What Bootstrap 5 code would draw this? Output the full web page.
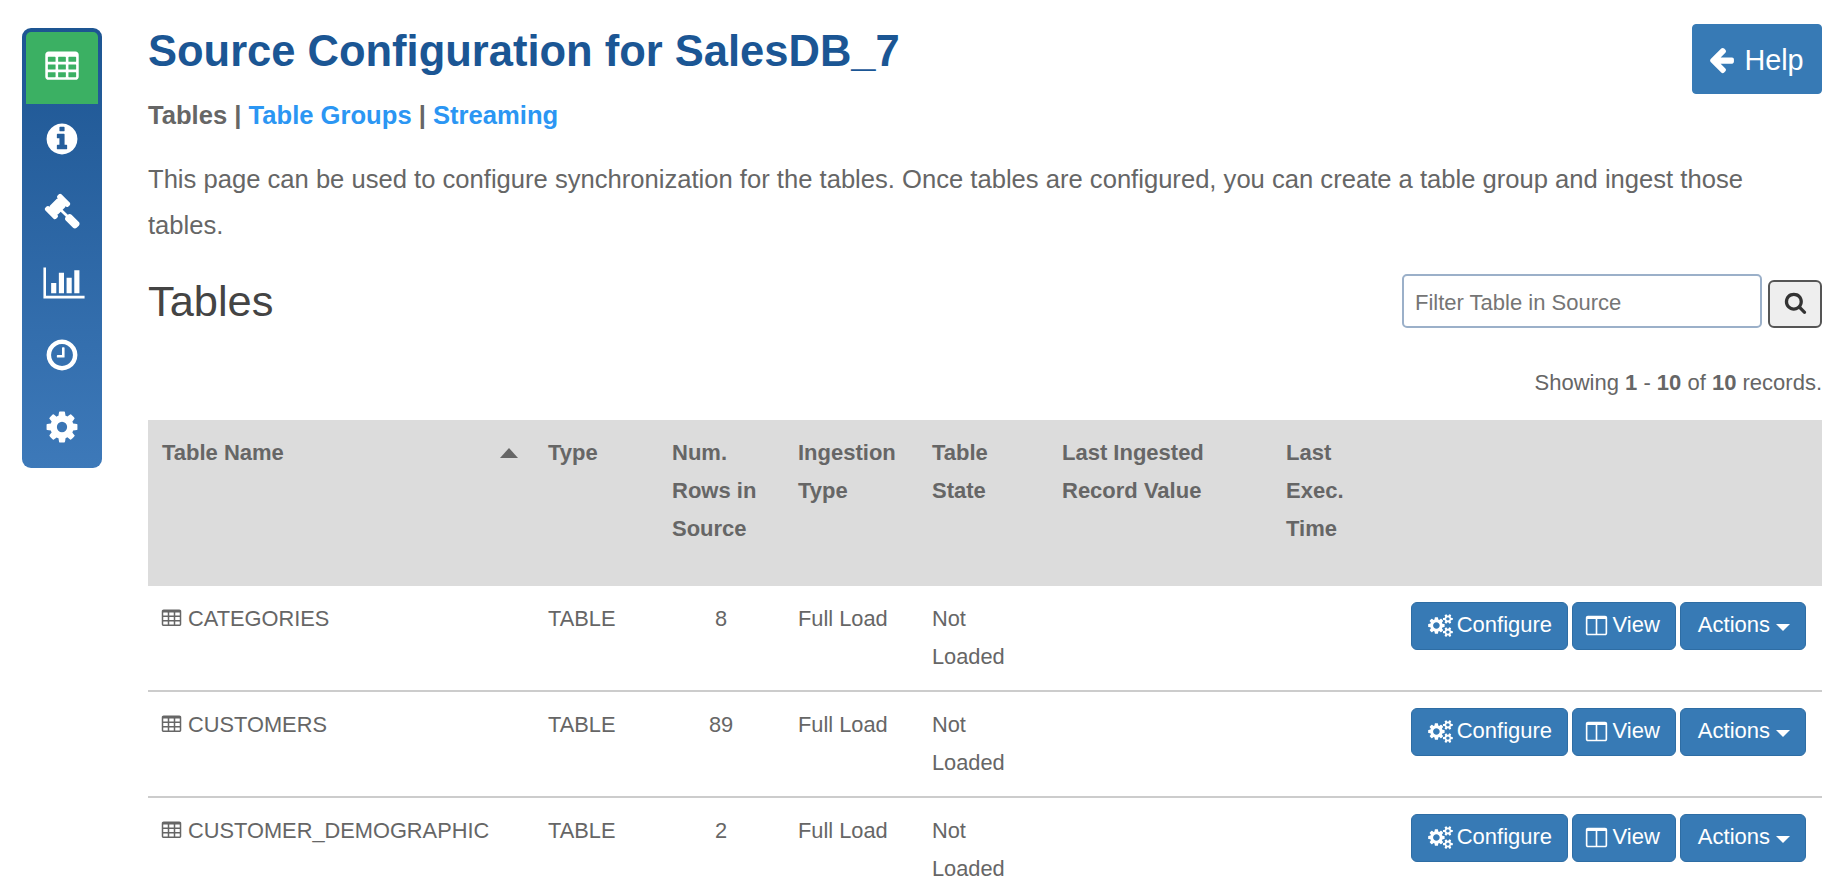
<!DOCTYPE html>
<html>

<head>
  <meta charset="utf-8">
  <meta name="viewport" content="width=device-width">
  <title>Source Configuration</title>
  <link href="https://cdn.jsdelivr.net/npm/bootstrap@5.3.2/dist/css/bootstrap.min.css" rel="stylesheet" type="text/css" />
  <script src="https://cdn.jsdelivr.net/npm/bootstrap@5.3.2/dist/js/bootstrap.bundle.min.js"></script>
  <style>
    html, body { height: 888px; overflow: hidden; }
    body { font-family: "Liberation Sans", Arial, sans-serif; font-size: 22px; line-height: 38px; color: #666; background: #fff; }
    .ico { fill: currentColor; flex: none; }

    .side-rail { width: 80px; height: 440px; margin: 28px 0 0 22px; padding: 4px; border-radius: 9px; background: linear-gradient(#1d5592, #3d79b9); flex: none; }
    .rail-item { height: 72px; color: #fff; padding-bottom: 2px; }
    .rail-item.active-item { background: #3bb063; border-radius: 5px 5px 0 0; }
    .rail-ico { width: 36px; height: 36px; }
    .rail-ico-wide { width: 42px; height: 36px; margin-left: 4px; }

    .main-area { margin-left: 46px; padding: 24px 22px 0 0; flex: 1; min-width: 0; }
    .page-title { font-size: 43.5px; font-weight: 700; line-height: 54px; color: #1b5694; margin: 0; }
    .help-btn { --bs-btn-bg: #377ab5; --bs-btn-border-color: #377ab5; --bs-btn-hover-bg: #377ab5; --bs-btn-hover-border-color: #377ab5; --bs-btn-color: #fff; --bs-btn-border-radius: 4px; width: 130px; height: 70px; font-size: 28.8px; padding: 4px 3px 0 0; }
    .help-ico { width: 29px; height: 29px; margin-top: -4px; }

    .sub-tabs { font-size: 25.6px; font-weight: 700; margin: 2px 0 22px; }
    .sub-tabs a { color: #2b96f3; text-decoration: none; }
    .intro-text { font-size: 25.6px; line-height: 46px; margin: 0 0 26px; }

    .tables-title { font-size: 43.4px; line-height: 54px; font-weight: 400; color: #444; margin: 0; }
    .filter-input { width: 360px; height: 54px; font-size: 22px; color: #666; padding: 3px 11px 0; border: 2px solid #9bb0c9; border-radius: 5px; }
    .filter-input::placeholder { color: #757575; }
    .search-btn { width: 54px; height: 48px; padding: 0 0 4px; margin-left: 6px; background: #eee; border: 2px solid #555; border-radius: 6px; color: #333; }
    .search-ico { width: 23px; height: 23px; }
    .record-count { font-size: 22px; line-height: 38px; margin: 36px 0 18px; }

    .src-tbl { width: 1674px; table-layout: fixed; margin: 0; --bs-table-color: #666; --bs-table-bg: transparent; }
    .src-tbl > thead > tr > th { background: #dcdcdc; color: #666; padding: 14px 14px 38px; border: 0; font-weight: 700; vertical-align: top; line-height: 38px; }
    .src-tbl > tbody > tr > td { padding: 14px; border-bottom: 2px solid #ccc; vertical-align: top; line-height: 38px; font-size: 21.8px; }
    .cw-name { width: 386px; }
    .cw-type { width: 124px; }
    .cw-rows { width: 126px; }
    .cw-ingest { width: 134px; }
    .cw-state { width: 130px; }
    .cw-last { width: 224px; }
    .cw-exec { width: 130px; }
    .sort-mark { width: 0; height: 0; border-left: 9px solid transparent; border-right: 9px solid transparent; border-bottom: 10px solid #666; margin: 14px 2px 0 0; }
    .tbl-ico { width: 21px; height: 21px; margin: 0 0 0 -1px; position: relative; top: -2px; }
    .row-acts { margin-top: 2px; margin-right: 2px; }
    .act-btn { --bs-btn-bg: #377ab5; --bs-btn-border-color: #2e6da4; --bs-btn-hover-bg: #377ab5; --bs-btn-hover-border-color: #2e6da4; --bs-btn-active-bg: #377ab5; --bs-btn-color: #fff; --bs-btn-hover-color: #fff; --bs-btn-border-radius: 6px; height: 48px; font-size: 22px; line-height: 1; padding: 0 15px 2px 16px; border-width: 1px; }
    .act-btn.view-act { padding-left: 10.5px; }
    .act-btn.menu-act { padding-left: 17px; }
    .act-ico { width: 25px; height: 23px; }
    .act-btn.dropdown-toggle::after { border-top-width: 7px; border-left-width: 7.5px; border-right-width: 7.5px; margin-left: 6px; vertical-align: 1px; }
  </style>
</head>

<body>
  <svg width="0" height="0" class="d-none">
    <symbol id="i-table" viewBox="0 0 1792 1792"><path fill-rule="evenodd" d="M576 1376v-192q0-14-9-23t-23-9h-320q-14 0-23 9t-9 23v192q0 14 9 23t23 9h320q14 0 23-9t9-23zm0-384v-192q0-14-9-23t-23-9h-320q-14 0-23 9t-9 23v192q0 14 9 23t23 9h320q14 0 23-9t9-23zm512 384v-192q0-14-9-23t-23-9h-320q-14 0-23 9t-9 23v192q0 14 9 23t23 9h320q14 0 23-9t9-23zm-512-768v-192q0-14-9-23t-23-9h-320q-14 0-23 9t-9 23v192q0 14 9 23t23 9h320q14 0 23-9t9-23zm512 384v-192q0-14-9-23t-23-9h-320q-14 0-23 9t-9 23v192q0 14 9 23t23 9h320q14 0 23-9t9-23zm512 384v-192q0-14-9-23t-23-9h-320q-14 0-23 9t-9 23v192q0 14 9 23t23 9h320q14 0 23-9t9-23zm-512-768v-192q0-14-9-23t-23-9h-320q-14 0-23 9t-9 23v192q0 14 9 23t23 9h320q14 0 23-9t9-23zm512 384v-192q0-14-9-23t-23-9h-320q-14 0-23 9t-9 23v192q0 14 9 23t23 9h320q14 0 23-9t9-23zm0-384v-192q0-14-9-23t-23-9h-320q-14 0-23 9t-9 23v192q0 14 9 23t23 9h320q14 0 23-9t9-23zm128-320v1088q0 66-47 113t-113 47h-1344q-66 0-113-47t-47-113v-1088q0-66 47-113t113-47h1344q66 0 113 47t47 113z"/></symbol>
    <symbol id="i-info" viewBox="0 0 1792 1792"><path fill-rule="evenodd" d="M1152 1376v-160q0-14-9-23t-23-9h-96v-512q0-14-9-23t-23-9h-320q-14 0-23 9t-9 23v160q0 14 9 23t23 9h96v320h-96q-14 0-23 9t-9 23v160q0 14 9 23t23 9h448q14 0 23-9t9-23zm-128-896v-160q0-14-9-23t-23-9h-192q-14 0-23 9t-9 23v160q0 14 9 23t23 9h192q14 0 23-9t9-23zm640 416q0 209-103 385.5t-279.5 279.5-385.5 103-385.5-103-279.5-279.5-103-385.5 103-385.5 279.5-279.5 385.5-103 385.5 103 279.5 279.5 103 385.5z"/></symbol>
    <symbol id="i-gavel" viewBox="0 0 1792 1792"><path d="M1771 1536q0 53-37 90l-107 108q-39 37-91 37-53 0-90-37l-363-364q-38-36-38-90 0-53 43-96l-256-256-126 126q-14 14-34 14t-34-14q2 2 12.5 12t12.5 13 10 11.5 10 13.5 6 13.5 5.5 16.5 1.5 18q0 38-28 68-3 3-16.5 18t-19 20.5-18.5 16.5-22 15.5-22 9-26 4.5q-40 0-68-28l-408-408q-28-28-28-68 0-13 4.5-26t9-22 15.5-22 16.5-18.5 20.5-19 18-16.5q30-28 68-28 10 0 18 1.5t16.5 5.5 13.5 6 13.5 10 11.5 10 13 12.5 12 12.5q-14-14-14-34t14-34l348-348q14-14 34-14t34 14q-2-2-12.5-12t-12.5-13-10-11.5-10-13.5-6-13.5-5.5-16.5-1.5-18q0-38 28-68 3-3 16.5-18t19-20.5 18.5-16.5 22-15.5 22-9 26-4.5q40 0 68 28l408 408q28 28 28 68 0 13-4.5 26t-9 22-15.5 22-16.5 18.5-20.5 19-18 16.5q-30 28-68 28-10 0-18-1.5t-16.5-5.5-13.5-6-13.5-10-11.5-10-13-12.5-12-12.5q14 14 14 34t-14 34l-126 126 256 256q43-43 96-43 52 0 91 37l363 363q37 39 37 91z"/></symbol>
    <symbol id="i-chart" viewBox="0 0 2048 1792"><path d="M640 896v512h-256v-512h256zm384-512v1024h-256v-1024h256zm1024 1152v128h-2048v-1536h128v1408h1920zm-640-896v768h-256v-768h256zm384-384v1152h-256v-1152h256z"/></symbol>
    <symbol id="i-clock" viewBox="0 0 1792 1792"><path fill-rule="evenodd" d="M1024 544v448q0 14-9 23t-23 9h-320q-14 0-23-9t-9-23v-64q0-14 9-23t23-9h224v-352q0-14 9-23t23-9h64q14 0 23 9t9 23zm416 352q0-148-73-273t-198-198-273-73-273 73-198 198-73 273 73 273 198 198 273 73 273-73 198-198 73-273zm224 0q0 209-103 385.5t-279.5 279.5-385.5 103-385.5-103-279.5-279.5-103-385.5 103-385.5 279.5-279.5 385.5-103 385.5 103 279.5 279.5 103 385.5z"/></symbol>
    <symbol id="i-cog" viewBox="0 0 1792 1792"><path fill-rule="evenodd" d="M1152 896q0-106-75-181t-181-75-181 75-75 181 75 181 181 75 181-75 75-181zm512-109v222q0 12-8 23t-20 13l-185 28q-19 54-39 91 35 50 107 138 10 12 10 25t-9 23q-27 37-99 108t-94 71q-12 0-26-9l-138-108q-44 23-91 38-16 136-29 186-7 28-36 28h-222q-14 0-24.5-8.5t-11.5-21.5l-28-184q-49-16-90-37l-141 107q-10 9-25 9-14 0-25-11-126-114-165-168-7-10-7-23 0-12 8-23 15-21 51-66.5t54-70.5q-27-50-41-99l-183-27q-13-2-21-12.5t-8-23.5v-222q0-12 8-23t19-13l186-28q14-46 39-92-40-57-107-138-10-12-10-24 0-10 9-23 26-36 98.5-107.5t94.5-71.5q13 0 26 10l138 107q44-23 91-38 16-136 29-186 7-28 36-28h222q14 0 24.5 8.5t11.5 21.5l28 184q49 16 90 37l142-107q9-9 24-9 13 0 25 10 129 119 165 170 7 8 7 22 0 12-8 23-15 21-51 66.5t-54 70.5q26 50 41 98l183 28q13 2 21 12.5t8 23.5z"/></symbol>
    <symbol id="i-left" viewBox="0 0 1792 1792"><path d="M1664 896v128q0 53-32.5 90.5t-84.5 37.5h-704l293 294q38 36 38 90t-38 90l-75 76q-37 37-90 37-52 0-91-37l-651-652q-37-37-37-90 0-52 37-91l651-650q38-38 91-38 52 0 90 38l75 74q38 38 38 91t-38 91l-293 293h704q52 0 84.5 37.5t32.5 90.5z"/></symbol>
    <symbol id="i-search" viewBox="0 0 1792 1792"><path fill-rule="evenodd" d="M1216 832q0-185-131.5-316.5t-316.5-131.5-316.5 131.5-131.5 316.5 131.5 316.5 316.5 131.5 316.5-131.5 131.5-316.5zm512 832q0 52-38 90t-90 38q-54 0-90-38l-343-342q-179 124-399 124-143 0-273.5-55.5t-225-150-150-225-55.5-273.5 55.5-273.5 150-225 225-150 273.5-55.5 273.5 55.5 225 150 150 225 55.5 273.5q0 220-124 399l343 343q37 37 37 90z"/></symbol>
    <symbol id="i-cogs" viewBox="0 0 1920 1792"><path fill-rule="evenodd" d="M896 896q0-106-75-181t-181-75-181 75-75 181 75 181 181 75 181-75 75-181zm768 512q0-52-38-90t-90-38-90 38-38 90q0 53 37.5 90.5t90.5 37.5 90.5-37.5 37.5-90.5zm0-1024q0-52-38-90t-90-38-90 38-38 90q0 53 37.5 90.5t90.5 37.5 90.5-37.5 37.5-90.5zm-384 421v185q0 10-7 19.5t-16 10.5l-155 24q-11 35-32 76 34 48 90 115 7 11 7 20 0 12-7 19-23 30-82.5 89.5t-78.5 59.5q-11 0-21-7l-115-90q-37 19-77 31-11 108-23 155-7 24-30 24h-186q-11 0-20-7.5t-10-17.5l-23-153q-34-10-75-31l-118 89q-7 7-20 7-11 0-21-8-144-133-144-160 0-9 7-19 10-14 41-53t47-61q-23-44-35-82l-152-24q-10-1-17-9.5t-7-19.5v-185q0-10 7-19.5t16-10.5l155-24q11-35 32-76-34-48-90-115-7-11-7-20 0-12 7-20 22-30 82-89t79-59q11 0 21 7l115 90q34-18 77-32 11-108 23-154 7-24 30-24h186q11 0 20 7.5t10 17.5l23 153q34 10 75 31l118-89q8-7 20-7 11 0 21 8 144 133 144 160 0 8-7 19-12 16-42 54t-45 60q23 48 34 82l152 23q10 2 17 10.5t7 19.5zm640 533v140q0 16-149 31-12 27-30 52 51 113 51 138 0 4-4 7-122 71-124 71-8 0-46-47t-52-68q-20 2-30 2t-30-2q-14 21-52 68t-46 47q-2 0-124-71-4-3-4-7 0-25 51-138-18-25-30-52-149-15-149-31v-140q0-16 149-31 13-29 30-52-51-113-51-138 0-4 4-7 4-2 35-20t59-34 30-16q8 0 46 46.5t52 67.5q20-2 30-2t30 2q51-71 92-112l6-2q4 0 124 70 4 3 4 7 0 25-51 138 17 23 30 52 149 15 149 31zm0-1024v140q0 16-149 31-12 27-30 52 51 113 51 138 0 4-4 7-122 71-124 71-8 0-46-47t-52-68q-20 2-30 2t-30-2q-14 21-52 68t-46 47q-2 0-124-71-4-3-4-7 0-25 51-138-18-25-30-52-149-15-149-31v-140q0-16 149-31 13-29 30-52-51-113-51-138 0-4 4-7 4-2 35-20t59-34 30-16q8 0 46 46.5t52 67.5q20-2 30-2t30 2q51-71 92-112l6-2q4 0 124 70 4 3 4 7 0 25-51 138 17 23 30 52 149 15 149 31z"/></symbol>
    <symbol id="i-columns" viewBox="0 0 1792 1792"><path fill-rule="evenodd" d="M224 1536h608v-1152h-640v1120q0 13 9.5 22.5t22.5 9.5zm1376-32v-1120h-640v1152h608q13 0 22.5-9.5t9.5-22.5zm128-1216v1216q0 66-47 113t-113 47h-1344q-66 0-113-47t-47-113v-1216q0-66 47-113t113-47h1344q66 0 113 47t47 113z"/></symbol>
  </svg>

  <div class="d-flex">
    <nav class="side-rail d-flex flex-column">
      <a href="#" class="rail-item active-item d-flex align-items-center justify-content-center"><svg class="ico rail-ico"><use href="#i-table"></use></svg></a>
      <a href="#" class="rail-item d-flex align-items-center justify-content-center"><svg class="ico rail-ico"><use href="#i-info"></use></svg></a>
      <a href="#" class="rail-item d-flex align-items-center justify-content-center"><svg class="ico rail-ico"><use href="#i-gavel"></use></svg></a>
      <a href="#" class="rail-item d-flex align-items-center justify-content-center"><svg class="ico rail-ico-wide"><use href="#i-chart"></use></svg></a>
      <a href="#" class="rail-item d-flex align-items-center justify-content-center"><svg class="ico rail-ico"><use href="#i-clock"></use></svg></a>
      <a href="#" class="rail-item d-flex align-items-center justify-content-center"><svg class="ico rail-ico"><use href="#i-cog"></use></svg></a>
    </nav>

    <main class="main-area">
      <div class="d-flex justify-content-between align-items-start">
        <h1 class="page-title">Source Configuration for SalesDB_7</h1>
        <button class="btn help-btn d-flex align-items-center justify-content-center gap-2"><svg class="ico help-ico"><use href="#i-left"></use></svg>Help</button>
      </div>

      <div class="sub-tabs">Tables | <a href="#">Table Groups</a> | <a href="#">Streaming</a></div>
      <p class="intro-text">This page can be used to configure synchronization for the tables. Once tables are configured, you can create a table group and ingest those tables.</p>

      <div class="d-flex justify-content-between align-items-center">
        <h2 class="tables-title">Tables</h2>
        <div class="d-flex align-items-end">
          <input type="text" class="form-control filter-input" placeholder="Filter Table in Source">
          <button class="btn search-btn d-flex align-items-center justify-content-center"><svg class="ico search-ico"><use href="#i-search"></use></svg></button>
        </div>
      </div>

      <div class="record-count text-end">Showing <b>1</b> - <b>10</b> of <b>10</b> records.</div>

      <table class="table src-tbl">
        <colgroup>
          <col class="cw-name"><col class="cw-type"><col class="cw-rows"><col class="cw-ingest"><col class="cw-state"><col class="cw-last"><col class="cw-exec"><col>
        </colgroup>
        <thead>
          <tr>
            <th><div class="d-flex justify-content-between">Table Name<span class="sort-mark"></span></div></th>
            <th>Type</th>
            <th>Num. Rows in Source</th>
            <th>Ingestion Type</th>
            <th>Table State</th>
            <th>Last Ingested Record Value</th>
            <th>Last Exec. Time</th>
            <th></th>
          </tr>
        </thead>
        <tbody id="tableRows"></tbody>
      </table>
    </main>
  </div>

  <script>
    const rows = [
      { name: "CATEGORIES", count: 8 },
      { name: "CUSTOMERS", count: 89 },
      { name: "CUSTOMER_DEMOGRAPHIC", count: 2 }
    ]
    const tableRows = document.querySelector("#tableRows")

    for (let i = 0; i < rows.length; i++) {
      const tr = document.createElement("tr")
      tr.innerHTML = `
        <td><svg class="ico tbl-ico"><use href="#i-table"></use></svg> ${rows[i].name}</td>
        <td>TABLE</td>
        <td class="text-center">${rows[i].count}</td>
        <td>Full Load</td>
        <td>Not Loaded</td>
        <td></td>
        <td></td>
        <td>
          <div class="row-acts d-flex justify-content-end gap-1">
            <button class="btn act-btn d-flex align-items-center gap-1"><svg class="ico act-ico"><use href="#i-cogs"></use></svg>Configure</button>
            <button class="btn act-btn view-act d-flex align-items-center gap-1"><svg class="ico act-ico"><use href="#i-columns"></use></svg>View</button>
            <button class="btn act-btn menu-act dropdown-toggle">Actions</button>
          </div>
        </td>`
      tableRows.appendChild(tr)
    }
  </script>
</body>

</html>
